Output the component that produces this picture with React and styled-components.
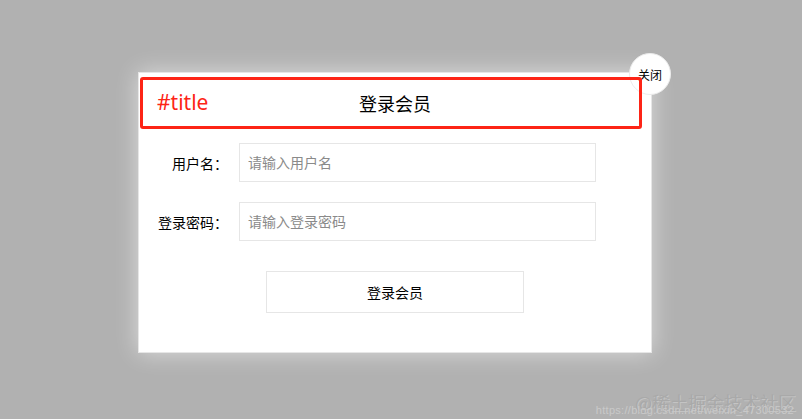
import React from "react";
import styled, { createGlobalStyle } from "styled-components";

const GlobalStyle = createGlobalStyle`
  html, body {
    margin: 0;
    padding: 0;
    background: #b1b1b1;
    font-family: "Noto Sans", "Noto Sans CJK SC", sans-serif;
  }
`;

function App() {
  return (
    <>
      <GlobalStyle />
      <Overlay>
        <Modal>
          <CloseButton>关闭</CloseButton>
          <TitleBar>
            <TitleTag>#title</TitleTag>
            <TitleText>登录会员</TitleText>
          </TitleBar>

          <Form>
            <Row>
              <Label>用户名：</Label>
              <Input placeholder="请输入用户名" />
            </Row>
            <Row>
              <Label>登录密码：</Label>
              <Input type="password" placeholder="请输入登录密码" />
            </Row>
            <SubmitButton>登录会员</SubmitButton>
          </Form>
        </Modal>

        <Watermark>
          <span>@稀土掘金技术社区</span>
          <small>https://blog.csdn.net/weixin_47300532</small>
        </Watermark>
      </Overlay>
    </>
  );
}

export default App;

const Overlay = styled.div`
  position: relative;
  width: 802px;
  height: 419px;
  padding: 72px 0 0 138px;
  box-sizing: border-box;
  overflow: hidden;
`;

const Modal = styled.div`
  position: relative;
  width: 514px;
  height: 281px;
  box-sizing: border-box;
  background: #fff;
  border: 1px solid #e6e6e6;
  box-shadow: 0 0 22px rgba(255, 255, 255, 0.55);
`;

const CloseButton = styled.div`
  position: absolute;
  top: -20px;
  left: 490px;
  width: 42px;
  height: 42px;
  box-sizing: border-box;
  border-radius: 50%;
  background: #fff;
  border: 1px solid #ececec;
  display: flex;
  align-items: center;
  justify-content: center;
  font-size: 12px;
  color: #000;
  font-family: "Noto Sans CJK SC", sans-serif;
`;

const TitleBar = styled.div`
  position: relative;
  margin: 4px 9px 0 1px;
  height: 52px;
  box-sizing: border-box;
  border: 3px solid #fd2416;
  border-radius: 3px;
  display: flex;
  align-items: center;
  justify-content: center;
`;

const TitleTag = styled.span`
  position: absolute;
  left: 14px;
  top: 50%;
  transform: translateY(-52%);
  color: #fd2416;
  font-size: 21px;
  font-family: "Noto Sans", "Noto Sans CJK SC", sans-serif;
`;

const TitleText = styled.span`
  margin-left: 8px;
  font-size: 18px;
  color: #000;
  font-family: "Noto Sans CJK SC", sans-serif;
`;

const Form = styled.div`
  display: flex;
  flex-direction: column;
  padding-top: 14px;
`;

const Row = styled.div`
  display: flex;
  align-items: center;
  margin-bottom: 20px;
`;

const Label = styled.label`
  width: 89px;
  text-align: right;
  margin-right: 11px;
  font-size: 14px;
  color: #000;
  font-family: "Noto Sans CJK SC", sans-serif;
`;

const Input = styled.input`
  width: 357px;
  height: 39px;
  box-sizing: border-box;
  border: 1px solid #e6e6e6;
  padding: 0 8px 2px;
  font-size: 14px;
  font-family: "Noto Sans CJK SC", sans-serif;
  outline: none;

  &::placeholder {
    color: #8a8a8a;
  }
`;

const SubmitButton = styled.button`
  align-self: center;
  margin-top: 10px;
  width: 258px;
  height: 42px;
  box-sizing: border-box;
  background: #fff;
  border: 1px solid #e6e6e6;
  padding-bottom: 2px;
  font-size: 14px;
  color: #000;
  font-family: "Noto Sans CJK SC", sans-serif;
  cursor: pointer;
`;

const Watermark = styled.div`
  position: absolute;
  right: 8px;
  bottom: 2px;
  display: flex;
  flex-direction: column;
  align-items: flex-end;
  font-family: "Noto Sans CJK SC", sans-serif;

  span {
    font-size: 18px;
    line-height: 20px;
    color: #a9a9a9;
    text-shadow: 1px 1px 0 #c4c4c4;
    margin-right: -2px;
  }

  small {
    margin-top: -8px;
    font-size: 11px;
    line-height: 13px;
    color: #c9c9c9;
    font-family: "Liberation Sans", sans-serif;
    letter-spacing: 0.3px;
  }
`;
